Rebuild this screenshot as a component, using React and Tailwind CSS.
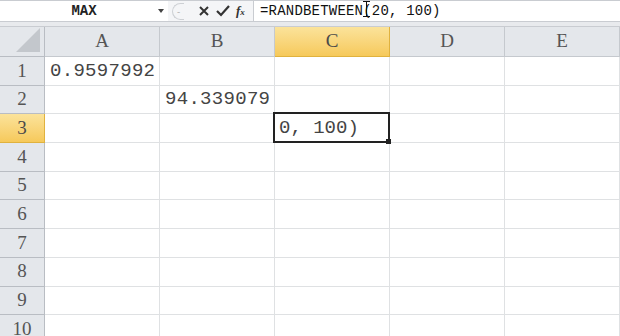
const cols = ["A", "B", "C", "D", "E"];
const rows = [1, 2, 3, 4, 5, 6, 7, 8, 9, 10];

const cells = {
  "1-A": "0.9597992",
  "2-B": "94.339079",
};

function FormulaBar() {
  return (
    <div className="flex h-[21px] items-center border-t border-[#c9ccd1] bg-white">
      <div className="relative flex h-full w-[168px] items-center justify-center">
        <span className="font-['Liberation_Mono',monospace] text-[14px] font-bold text-[#222]">MAX</span>
        <span className="absolute right-[4px] top-[8px] h-0 w-0 border-x-[3px] border-t-[4px] border-x-transparent border-t-[#444]" />
      </div>
      <div className="flex h-full w-[86px] items-center gap-[6px] border-r border-[#c9ccd1] bg-[#f4f5f7] pl-[4px]">
        <span className="flex h-[17px] w-[12px] items-center justify-center rounded-l-full border border-r-0 border-[#cdd0d4] text-[10px] text-[#bbb]">-</span>
        <svg width="12" height="12" viewBox="0 0 12 12" className="ml-[8px]">
          <path d="M2 2 L10 10 M10 2 L2 10" stroke="#333" strokeWidth="2" />
        </svg>
        <svg width="14" height="12" viewBox="0 0 14 12">
          <path d="M1 6 L5 10 L13 1" stroke="#333" strokeWidth="2.2" fill="none" />
        </svg>
        <span className="font-['Liberation_Serif',serif] text-[13px] italic font-bold text-[#333]">
          f<span className="text-[9px]">x</span>
        </span>
      </div>
      <div className="relative flex h-full flex-1 items-center pl-[6px]">
        <span className="font-['Liberation_Mono',monospace] text-[14px] text-[#111] tracking-[0.2px]">
          =RANDBETWEEN(20, 100)
        </span>
        <span className="absolute left-[112px] top-0 h-[16px] w-[1px] bg-[#111]" />
        <span className="absolute left-[109px] top-0 h-[1px] w-[7px] bg-[#111]" />
        <span className="absolute left-[109px] top-[15px] h-[1px] w-[7px] bg-[#111]" />
      </div>
    </div>
  );
}

export default function App() {
  return (
    <div className="h-[336px] w-[620px] overflow-hidden bg-white">
      <FormulaBar />
      <div className="h-[6px] border-y border-[#c9ccd1] bg-[#e8eaed]" />
      <div className="grid grid-cols-[45px_115px_115px_115px_115px_115px]">
        <div className="relative h-[30px] border-b border-r border-[#b9bdc3] bg-[#e4e7eb]">
          <svg width="24" height="24" className="absolute bottom-[4px] right-[4px]">
            <path d="M24 0 L24 24 L0 24 Z" fill="#c3c7cc" />
          </svg>
        </div>
        {cols.map((c) => (
          <div
            key={c}
            className={
              c === "C"
                ? "flex h-[30px] items-center justify-center border-b border-r border-[#e0b23e] bg-gradient-to-b from-[#fbe39a] to-[#f6c95a] font-['Liberation_Serif',serif] text-[19px] text-[#4a4a4a]"
                : "flex h-[30px] items-center justify-center border-b border-r border-[#c5c9ce] bg-[#e4e7eb] font-['Liberation_Serif',serif] text-[19px] text-[#555]"
            }
          >
            {c}
          </div>
        ))}
        {rows.map((r) => (
          <Row key={r} r={r} />
        ))}
      </div>
    </div>
  );
}

function Row({ r }) {
  const hdr =
    r === 3
      ? "flex h-[28.7px] items-center justify-center border-b border-r border-[#e0b23e] bg-gradient-to-b from-[#fbe39a] to-[#f6c95a] font-['Liberation_Serif',serif] text-[19px] text-[#4a4a4a]"
      : "flex h-[28.7px] items-center justify-center border-b border-r border-[#b9bdc3] bg-[#e4e7eb] font-['Liberation_Serif',serif] text-[19px] text-[#555]";
  return (
    <>
      <div className={hdr}>{r}</div>
      {cols.map((c) => {
        const active = r === 3 && c === "C";
        return (
          <div
            key={c}
            className="relative flex h-[28.7px] items-center border-b border-r border-[#dfe1e3] bg-white"
          >
            {cells[`${r}-${c}`] && (
              <span className="whitespace-nowrap pl-[5px] font-['Liberation_Mono',monospace] text-[19px] tracking-[0.3px] text-[#444]">
                {cells[`${r}-${c}`]}
              </span>
            )}
            {active && (
              <div className="absolute -left-[2px] -top-[2px] z-10 flex h-[31px] w-[117px] items-center border-2 border-[#222] bg-white">
                <span className="whitespace-nowrap pl-[4px] font-['Liberation_Mono',monospace] text-[19px] text-[#444]">
                  0, 100)
                </span>
                <span className="absolute -bottom-[3px] -right-[3px] h-[5px] w-[5px] bg-[#222]" />
              </div>
            )}
          </div>
        );
      })}
    </>
  );
}
